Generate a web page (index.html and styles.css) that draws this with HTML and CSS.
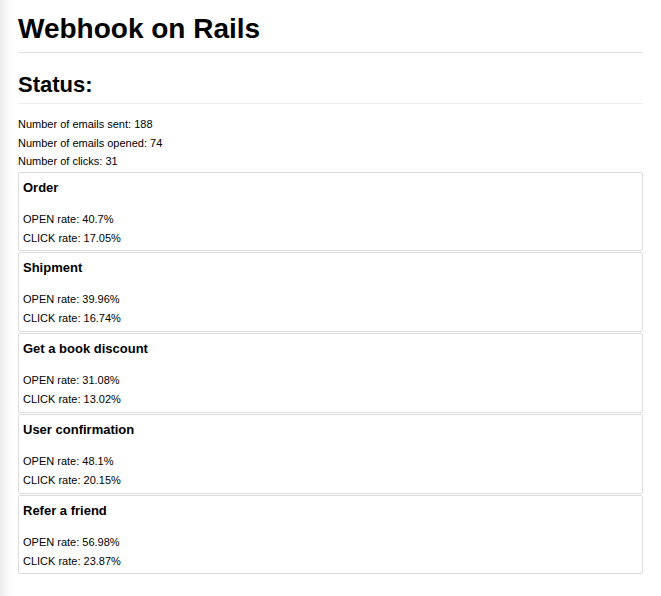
FILE: index.html
```html
<!DOCTYPE html>
<html>
<head>
<meta charset="utf-8">
<link rel="stylesheet" href="styles.css">
</head>
<body>
<div class="page">
  <h1 class="title">Webhook on Rails</h1>
  <h2 class="subtitle">Status:</h2>
  <div class="stats">
    <p>Number of emails sent: 188</p>
    <p>Number of emails opened: 74</p>
    <p>Number of clicks: 31</p>
  </div>
  <div class="cards">
    <div class="card">
      <h3>Order</h3>
      <p>OPEN rate: 40.7%</p>
      <p>CLICK rate: 17.05%</p>
    </div>
    <div class="card">
      <h3>Shipment</h3>
      <p>OPEN rate: 39.96%</p>
      <p>CLICK rate: 16.74%</p>
    </div>
    <div class="card">
      <h3>Get a book discount</h3>
      <p>OPEN rate: 31.08%</p>
      <p>CLICK rate: 13.02%</p>
    </div>
    <div class="card">
      <h3>User confirmation</h3>
      <p>OPEN rate: 48.1%</p>
      <p>CLICK rate: 20.15%</p>
    </div>
    <div class="card">
      <h3>Refer a friend</h3>
      <p>OPEN rate: 56.98%</p>
      <p>CLICK rate: 23.87%</p>
    </div>
  </div>
</div>
</body>
</html>
```

FILE: styles.css
```css
html, body {
  margin: 0;
  padding: 0;
  background: #fff;
}
body {
  font-family: "Liberation Sans", Arial, sans-serif;
  color: #000;
}
.page {
  padding: 11px 18px 20px 18px;
  background: linear-gradient(to right, #ececec 0px, #fafafa 8px, #fff 14px);
  min-height: 565px;
}
.title {
  font-size: 28px;
  font-weight: bold;
  margin: 0;
  line-height: 36px;
  padding-bottom: 5px;
  border-bottom: 1px solid #e2e2e2;
}
.subtitle {
  font-size: 22px;
  font-weight: bold;
  margin: 18px 0 0 0;
  line-height: 28px;
  padding-bottom: 4px;
  border-bottom: 1px solid #eeeeee;
}
.stats {
  margin-top: 11px;
}
.stats p {
  margin: 0;
  font-size: 11px;
  line-height: 18.5px;
}
.card p {
  margin: 0;
  font-size: 11px;
  line-height: 19px;
}
.cards {
  display: flex;
  flex-direction: column;
  gap: 1px;
  margin-top: 1px;
}
.card {
  box-sizing: border-box;
  border: 1px solid #dcdcdc;
  border-radius: 2px;
  padding: 6px 4px 0 4px;
  height: 79.75px;
  background: #fff;
}
.card h3 {
  margin: 0 0 13px 0;
  font-size: 13px;
  font-weight: bold;
  line-height: 18px;
}
```
